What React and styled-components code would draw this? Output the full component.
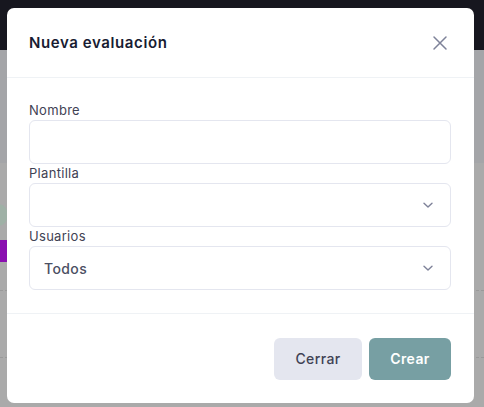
import React from 'react';
import styled, { createGlobalStyle } from 'styled-components';

const GlobalStyle = createGlobalStyle`
  html, body { margin: 0; padding: 0; }
  body {
    font-family: Inter, "Noto Sans", sans-serif;
    background: #aaaaaa;
  }
  * { box-sizing: border-box; }
`;

const Page = styled.div`
  position: relative;
  width: 484px;
  height: 407px;
  overflow: hidden;
  background: #aaaaaa;
`;

const TopBar = styled.div`
  height: 50px;
  background: #17171f;
`;

const Band = styled.div`
  height: 113px;
  background: #a4a5a8;
`;

// Bits of the page peeking out from behind the modal, on the left edge
const Dot = styled.div`
  position: absolute;
  left: -12px;
  top: 204px;
  width: 20px;
  height: 22px;
  border-radius: 50%;
  background: #9fb1a6;
`;

const Tag = styled.div`
  position: absolute;
  left: 0;
  top: 240px;
  width: 7px;
  height: 22px;
  background: #8a0fb0;
`;

const Dash = styled.div`
  position: absolute;
  left: 0;
  right: 0;
  top: ${({ $top }) => $top}px;
  border-top: 1px dashed #999;
`;

const Modal = styled.div`
  position: absolute;
  left: 7px;
  top: 8px;
  width: 467px;
  height: 395px;
  background: #fff;
  border-radius: 7px;
  display: flex;
  flex-direction: column;
`;

const Header = styled.div`
  height: 70px;
  padding: 0 24px 0 22px;
  display: flex;
  align-items: center;
  justify-content: space-between;
  border-bottom: 1px solid #eff2f5;
`;

const Title = styled.h3`
  margin: 0;
  font-size: 15px;
  font-weight: 600;
  color: #181c32;
  letter-spacing: 0.6px;
`;

const CloseButton = styled.button`
  border: 0;
  background: none;
  padding: 0;
  width: 20px;
  height: 20px;
  display: flex;
  align-items: center;
  justify-content: center;
  cursor: pointer;
`;

const Body = styled.div`
  padding: 23px 23px 23px 22px;
  display: flex;
  flex-direction: column;
  border-bottom: 1px solid #eff2f5;
`;

const Label = styled.label`
  display: block;
  height: 19px;
  line-height: 19px;
  font-size: 13px;
  font-weight: 400;
  color: #3f4254;
  letter-spacing: 0.3px;
`;

const Field = styled.div`
  height: 44px;
  border: 1px solid #e4e6ef;
  border-radius: 6px;
  padding: 0 16px 0 14px;
  display: flex;
  align-items: center;
  justify-content: space-between;
  font-size: 14px;
  font-weight: 500;
  color: #4b4f63;
  letter-spacing: 0.4px;
`;

const Footer = styled.div`
  flex: 1;
  padding: 0 23px 0 22px;
  display: flex;
  align-items: center;
  justify-content: flex-end;
  gap: 7px;
`;

const Button = styled.button`
  height: 42px;
  width: ${({ $w }) => $w}px;
  border: 0;
  border-radius: 6px;
  font-family: inherit;
  font-size: 14px;
  letter-spacing: 0.4px;
  font-weight: ${({ $primary }) => ($primary ? 600 : 500)};
  background: ${({ $primary }) => ($primary ? '#779fa3' : '#e4e6ef')};
  color: ${({ $primary }) => ($primary ? '#ffffff' : '#3f4254')};
  cursor: pointer;
`;

const Chevron = () => (
  <svg width="12" height="12" viewBox="0 0 12 12" fill="none">
    <path d="M2 4.2 L6 8 L10 4.2" stroke="#7e8299" strokeWidth="1.4" strokeLinecap="round" strokeLinejoin="round" />
  </svg>
);

const CloseIcon = () => (
  <svg width="16" height="16" viewBox="0 0 16 16" fill="none">
    <path d="M2 2 L14 14 M14 2 L2 14" stroke="#7e8299" strokeWidth="1.5" strokeLinecap="round" />
  </svg>
);

export default function App() {
  return (
    <>
      <GlobalStyle />
      <Page>
        <TopBar />
        <Band />
        <Dot />
        <Tag />
        <Dash $top={290} />
        <Dash $top={357} />
        <Modal>
          <Header>
            <Title>Nueva evaluación</Title>
            <CloseButton aria-label="Cerrar"><CloseIcon /></CloseButton>
          </Header>
          <Body>
            <Label>Nombre</Label>
            <Field />
            <Label>Plantilla</Label>
            <Field><span /><Chevron /></Field>
            <Label>Usuarios</Label>
            <Field><span>Todos</span><Chevron /></Field>
          </Body>
          <Footer>
            <Button $w={88}>Cerrar</Button>
            <Button $w={82} $primary>Crear</Button>
          </Footer>
        </Modal>
      </Page>
    </>
  );
}
